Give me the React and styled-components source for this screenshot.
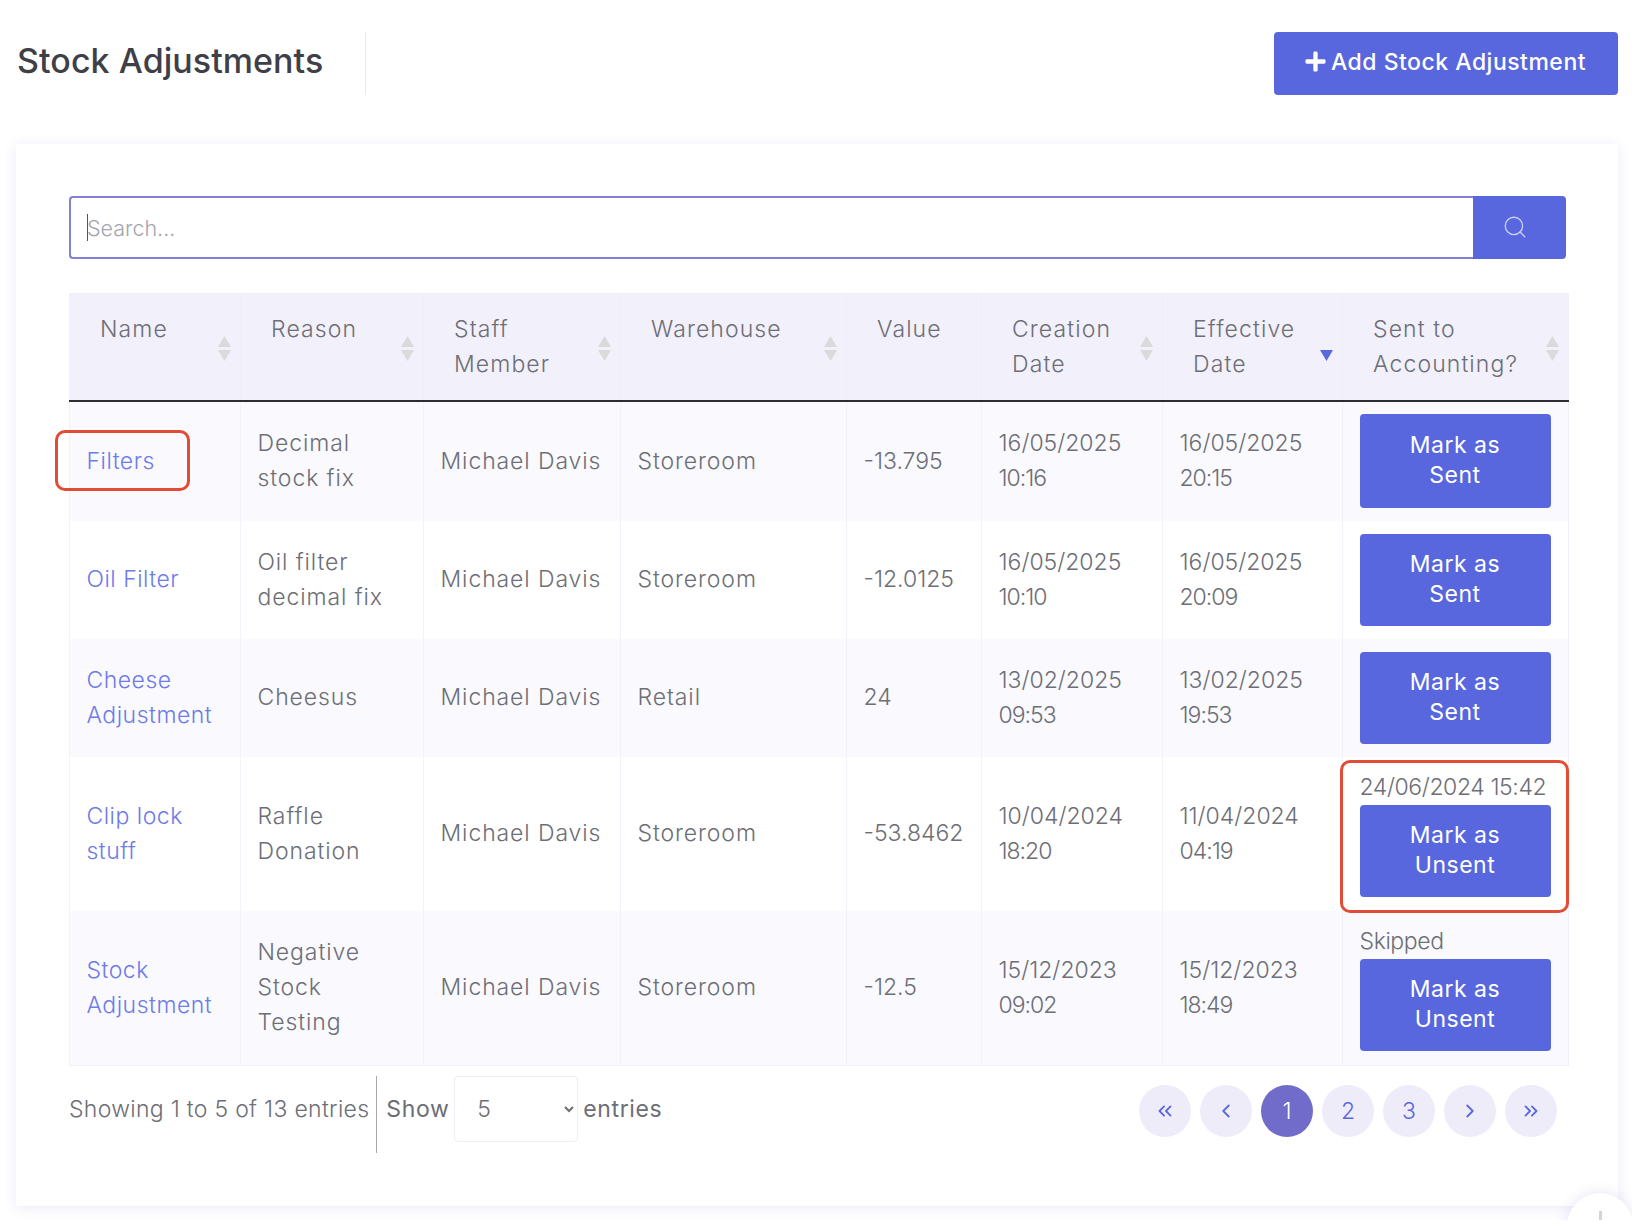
import React from "react";
import styled, { createGlobalStyle } from "styled-components";
import { FaPlus } from "react-icons/fa";
import { Search, ChevronsLeft, ChevronsRight, ChevronLeft, ChevronRight } from "lucide-react";

const GlobalStyle = createGlobalStyle`
  html, body {
    margin: 0;
    background: #fff;
    font-family: "Inter", "Liberation Sans", sans-serif;
    color: #6d6e76;
  }
`;

const Page = styled.div`
  width: 1632px;
  height: 1222px;
  box-sizing: border-box;
  padding: 32px 14px 0 16px;
  border-top: 2px solid #f8f8f8;
  margin-top: -2px;
  overflow: hidden;
  position: relative;
`;

const Header = styled.header`
  display: flex;
  justify-content: space-between;
  align-items: stretch;
  height: 63px;
`;

const TitleBox = styled.div`
  width: 350px;
  box-sizing: border-box;
  padding: 0 0 6px 1px;
  border-right: 1px solid #e9e8f2;
  display: flex;
  align-items: center;
`;

const Title = styled.h1`
  margin: 0;
  font-size: 34px;
  font-weight: 500;
  letter-spacing: 0.05px;
  color: #3f4047;
`;

const AddButton = styled.button`
  width: 344px;
  border: 0;
  padding: 0 2px 4px 0;
  border-radius: 4px;
  background: #5867dd;
  color: #fff;
  font: 500 23px "Inter", sans-serif;
  letter-spacing: 0.5px;
  display: flex;
  align-items: center;
  justify-content: center;
  gap: 4px;
`;

const Card = styled.section`
  margin-top: 49px;
  height: 1062px;
  box-sizing: border-box;
  padding: 52px 50px 0 53px;
  background: #fff;
  box-shadow: 0 2px 12px rgba(88, 80, 200, 0.12);
`;

const SearchRow = styled.div`
  display: flex;
  height: 63px;
  width: 1497px;
  position: relative;
`;

const SearchInput = styled.input`
  flex: 1;
  min-width: 0;
  box-sizing: border-box;
  border: 2px solid #8480d8;
  border-right: 0;
  border-radius: 4px 0 0 4px;
  padding: 0 16px;
  font: 300 21.5px "Inter", sans-serif;
  outline: none;
  &::placeholder {
    color: #a4a5ad;
  }
`;

const Caret = styled.span`
  position: absolute;
  left: 18px;
  top: 18px;
  width: 1px;
  height: 27px;
  background: #555;
`;

const SearchButton = styled.button`
  width: 93px;
  border: 0;
  padding: 0 10px 2px 0;
  border-radius: 0 4px 4px 0;
  background: #5867dd;
  color: #cdd2f6;
  display: flex;
  align-items: center;
  justify-content: center;
`;

const Table = styled.table`
  margin-top: 34px;
  width: 1499px;
  table-layout: fixed;
  border-collapse: collapse;
  border: 1px solid #f1f0fa;
  font-size: 23px;
  line-height: 35px;
  font-weight: 300;
`;

const Col = styled.col`
  width: ${(p) => p.$w}px;
`;

const Th = styled.th`
  position: relative;
  height: 107px;
  box-sizing: border-box;
  padding: 18px 0 0 30px;
  vertical-align: top;
  text-align: left;
  font-weight: 300;
  letter-spacing: 1.1px;
  white-space: pre-line;
  background: #f2f1fb;
  border-left: 1px solid #eeedf8;
  border-bottom: 2px solid #2d2d33;
`;

const SortIcon = styled.svg`
  position: absolute;
  right: 9px;
  top: 42px;
  width: 13px;
  height: 25px;
`;

const Row = styled.tr`
  height: ${(p) => p.$h}px;
  background: ${(p) => (p.$odd ? "#fafafe" : "#fff")};
`;

const Td = styled.td`
  position: relative;
  padding: 0 16.5px;
  white-space: pre-line;
  letter-spacing: ${(p) => (p.$num ? "0" : "0.9px")};
  border-left: 1px solid #f3f2fb;
`;

const NameLink = styled.a`
  color: #6d7be8;
  font-weight: 300;
  letter-spacing: 0.5px;
`;

const TimeText = styled.span`
  letter-spacing: -1px;
`;

const StatusText = styled.div`
  white-space: nowrap;
  letter-spacing: -0.4px;
`;

const MarkButton = styled.button`
  display: block;
  width: 191px;
  height: ${(p) => (p.$tall ? 94 : 92)}px;
  border: 0;
  padding: 0 0 2px;
  border-radius: 4px;
  background: #5867dd;
  color: #fff;
  font: 400 23px/30px "Inter", sans-serif;
  letter-spacing: 0.5px;
  white-space: pre-line;
`;

const Callout = styled.span`
  position: absolute;
  box-sizing: border-box;
  left: ${(p) => p.$l}px;
  top: ${(p) => p.$t}px;
  width: ${(p) => p.$w}px;
  height: ${(p) => p.$h}px;
  border: 3px solid #e24b35;
  border-radius: 10px;
  pointer-events: none;
`;

const Footer = styled.div`
  display: flex;
  width: 1499px;
  padding-top: 10px;
  font-size: 23px;
  font-weight: 300;
`;

const Info = styled.div`
  line-height: 67px;
  letter-spacing: 0.3px;
`;

const Divider = styled.div`
  width: 1px;
  height: 77px;
  margin: 0 9px 0 7px;
  background: #a8a8a8;
`;

const ShowLabel = styled.label`
  display: flex;
  gap: 5px;
  line-height: 67px;
  font-weight: 400;
  letter-spacing: 0.6px;
`;

const PageSelect = styled.select`
  width: 124px;
  height: 66px;
  padding-left: 18px;
  background: #fff;
  border: 1px solid #eeedf6;
  border-radius: 4px;
  color: #6d6e76;
  font: 300 23px "Inter", sans-serif;
  outline: none;
`;

const Pager = styled.nav`
  margin: 9px 11px 0 auto;
  display: flex;
  gap: 9px;
`;

const PageDot = styled.a`
  width: 52px;
  height: 52px;
  border-radius: 50%;
  display: flex;
  align-items: center;
  justify-content: center;
  font-size: 23px;
  font-weight: 300;
  background: ${(p) => (p.$active ? "#716cc9" : "#eeecf8")};
  color: ${(p) => (p.$active ? "#fff" : "#5a68de")};
`;

const ChatBubble = styled.div`
  position: absolute;
  left: 1567px;
  top: 1193px;
  width: 66px;
  height: 66px;
  border-radius: 50%;
  background: #fff;
  box-shadow: 0 0 14px rgba(88, 80, 200, 0.16);
  &::after {
    content: "";
    position: absolute;
    left: 32px;
    top: 18px;
    width: 3px;
    height: 14px;
    background: #d4d4d4;
  }
`;

const SortArrows = () => (
  <SortIcon viewBox="0 0 13 25">
    <path d="M6.5 0 L13 11 H0 Z" fill="#dadada" />
    <path d="M0 14 H13 L6.5 25 Z" fill="#dadada" />
  </SortIcon>
);

const SortDown = () => (
  <SortIcon viewBox="0 0 13 25">
    <path d="M0 14 H13 L6.5 25 Z" fill="#5a68de" />
  </SortIcon>
);

const DateCell = ({ value }) => {
  const [date, time] = value.split(" ");
  return (
    <Td $num>
      {date}
      <br />
      <TimeText>{time}</TimeText>
    </Td>
  );
};

const columns = [
  { label: "Name", w: 171 },
  { label: "Reason", w: 183 },
  { label: "Staff\nMember", w: 197 },
  { label: "Warehouse", w: 226 },
  { label: "Value", w: 135, noSort: true },
  { label: "Creation\nDate", w: 181 },
  { label: "Effective\nDate", w: 180, active: true },
  { label: "Sent to\nAccounting?", w: 226 },
];

const rows = [
  { h: 120, name: "Filters", reason: "Decimal\nstock fix", wh: "Storeroom", value: "-13.795", created: "16/05/2025 10:16", effective: "16/05/2025 20:15", action: "Mark as\nSent", tall: true },
  { h: 118, name: "Oil Filter", reason: "Oil filter\ndecimal fix", wh: "Storeroom", value: "-12.0125", created: "16/05/2025 10:10", effective: "16/05/2025 20:09", action: "Mark as\nSent" },
  { h: 118, name: "Cheese\nAdjustment", reason: "Cheesus", wh: "Retail", value: "24", created: "13/02/2025 09:53", effective: "13/02/2025 19:53", action: "Mark as\nSent" },
  { h: 154, name: "Clip lock\nstuff", reason: "Raffle\nDonation", wh: "Storeroom", value: "-53.8462", created: "10/04/2024 18:20", effective: "11/04/2024 04:19", status: "24/06/2024 15:42", action: "Mark as\nUnsent" },
  { h: 155, name: "Stock\nAdjustment", reason: "Negative\nStock\nTesting", wh: "Storeroom", value: "-12.5", created: "15/12/2023 09:02", effective: "15/12/2023 18:49", status: "Skipped", action: "Mark as\nUnsent" },
];

const App = () => {
  return (
    <Page>
      <GlobalStyle />
      <Header>
        <TitleBox>
          <Title>Stock Adjustments</Title>
        </TitleBox>
        <AddButton>
          <FaPlus size={23} />
          Add Stock Adjustment
        </AddButton>
      </Header>
      <Card>
        <SearchRow>
          <SearchInput placeholder="Search..." />
          <Caret />
          <SearchButton>
            <Search size={26} strokeWidth={1.2} />
          </SearchButton>
        </SearchRow>
        <Table>
          <colgroup>
            {columns.map((c) => (
              <Col key={c.label} $w={c.w} />
            ))}
          </colgroup>
          <thead>
            <tr>
              {columns.map((c) => (
                <Th key={c.label}>
                  {c.label}
                  {c.active ? <SortDown /> : c.noSort ? null : <SortArrows />}
                </Th>
              ))}
            </tr>
          </thead>
          <tbody>
            {rows.map((r, i) => (
              <Row key={r.name} $h={r.h} $odd={i % 2 === 0}>
                <Td>
                  <NameLink>{r.name}</NameLink>
                  {i === 0 && <Callout $l={-15} $t={28} $w={135} $h={61} />}
                </Td>
                <Td>{r.reason}</Td>
                <Td>Michael Davis</Td>
                <Td>{r.wh}</Td>
                <Td $num>{r.value}</Td>
                <DateCell value={r.created} />
                <DateCell value={r.effective} />
                <Td>
                  {r.status && <StatusText>{r.status}</StatusText>}
                  <MarkButton $tall={r.tall}>{r.action}</MarkButton>
                  {i === 3 && <Callout $l={-3} $t={3} $w={229} $h={153} />}
                </Td>
              </Row>
            ))}
          </tbody>
        </Table>
        <Footer>
          <Info>Showing 1 to 5 of 13 entries</Info>
          <Divider />
          <ShowLabel>
            Show
            <PageSelect defaultValue="5">
              <option>5</option>
              <option>10</option>
              <option>25</option>
            </PageSelect>
            entries
          </ShowLabel>
          <Pager>
            <PageDot><ChevronsLeft size={22} strokeWidth={2} /></PageDot>
            <PageDot><ChevronLeft size={22} strokeWidth={2} /></PageDot>
            <PageDot $active>1</PageDot>
            <PageDot>2</PageDot>
            <PageDot>3</PageDot>
            <PageDot><ChevronRight size={22} strokeWidth={2} /></PageDot>
            <PageDot><ChevronsRight size={22} strokeWidth={2} /></PageDot>
          </Pager>
        </Footer>
      </Card>
      <ChatBubble />
    </Page>
  );
};

export default App;
